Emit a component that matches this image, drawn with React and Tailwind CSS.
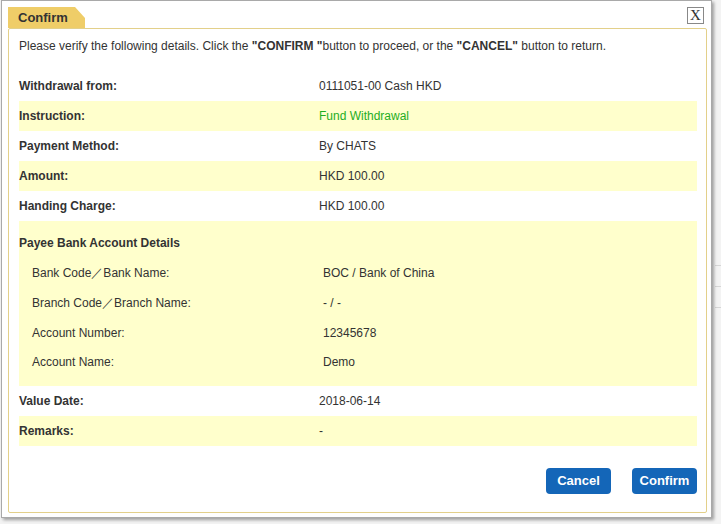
import React from "react";

const Row = ({ label, value, shade, green }) => (
  <div className={`flex h-[30px] items-center ${shade ? "bg-[#ffffcc]" : ""}`}>
    <div className="w-[300px] font-bold text-[#333]">{label}</div>
    <div className={green ? "text-[#1fae1f]" : "text-[#333]"}>{value}</div>
  </div>
);

const SubRow = ({ label, value, h = "h-[30px]" }) => (
  <div className={`flex ${h} items-center`}>
    <div className="w-[304px] pl-[13px] text-[#333]">{label}</div>
    <div className="text-[#333]">{value}</div>
  </div>
);

export default function App() {
  return (
    <div
      className="w-[721px] h-[524px] bg-[#f3f3f3] overflow-hidden relative text-[12px]"
      style={{ fontFamily: '"Liberation Sans", Arial, sans-serif' }}
    >
      <div className="absolute right-0 top-[265px] w-[6px] flex flex-col gap-[20px]">
        <div className="h-px bg-[#d6d6d6]" />
        <div className="h-px bg-[#d6d6d6]" />
        <div className="h-px bg-[#d6d6d6]" />
      </div>
      <div className="relative ml-px w-[711px] h-[518px] bg-white border border-[#a9a9a9] shadow-[2px_2px_3px_rgba(0,0,0,0.35)] pl-[6px] pr-[4px] flex flex-col">
        <div className="h-[27px] flex items-end justify-between shrink-0">
          <div className="relative h-[21px] w-[77px] flex items-center pl-[10px] font-bold text-[13px] text-[#333] bg-[#efcd68] [clip-path:polygon(0_0,67px_0,77px_11px,77px_100%,0_100%)]">
            Confirm
          </div>
          <div className="self-start mt-[6px] mr-[3px] w-[17px] h-[17px] border border-[#888] flex items-center justify-center text-[15px] leading-none text-[#333]" style={{ fontFamily: '"Liberation Serif", serif' }}>
            X
          </div>
        </div>
        <div className="flex-1 mb-[4px] border border-[#e3d08a] rounded-[2px] pl-[10px] pr-[9px] pt-[9px] flex flex-col">
          <div className="text-[#333] h-[16px] leading-[16px]">
            Please verify the following details. Click the <b>"CONFIRM "</b>button to proceed, or the <b>"CANCEL"</b> button to return.
          </div>
          <div className="mt-[17px] flex flex-col">
            <Row label="Withdrawal from:" value="0111051-00 Cash HKD" />
            <Row label="Instruction:" value="Fund Withdrawal" shade green />
            <Row label="Payment Method:" value="By CHATS" />
            <Row label="Amount:" value="HKD 100.00" shade />
            <Row label="Handing Charge:" value="HKD 100.00" />
            <div className="bg-[#ffffcc] h-[165px] pt-[7px] flex flex-col">
              <div className="h-[30px] flex items-center font-bold text-[#333]">Payee Bank Account Details</div>
              <SubRow label="Bank Code／Bank Name:" value="BOC / Bank of China" />
              <SubRow label="Branch Code／Branch Name:" value="- / -" />
              <SubRow label="Account Number:" value="12345678" />
              <SubRow label="Account Name:" value="Demo" h="h-[28px]" />
            </div>
            <Row label="Value Date:" value="2018-06-14" />
            <Row label="Remarks:" value="-" shade />
          </div>
          <div className="mt-[22px] flex justify-end gap-[21px] pr-0">
            <button className="w-[65px] h-[26px] rounded-[4px] bg-[#1466b8] text-white text-[13px] font-semibold">Cancel</button>
            <button className="w-[65px] h-[26px] rounded-[4px] bg-[#1466b8] text-white text-[13px] font-semibold">Confirm</button>
          </div>
        </div>
      </div>
    </div>
  );
}
